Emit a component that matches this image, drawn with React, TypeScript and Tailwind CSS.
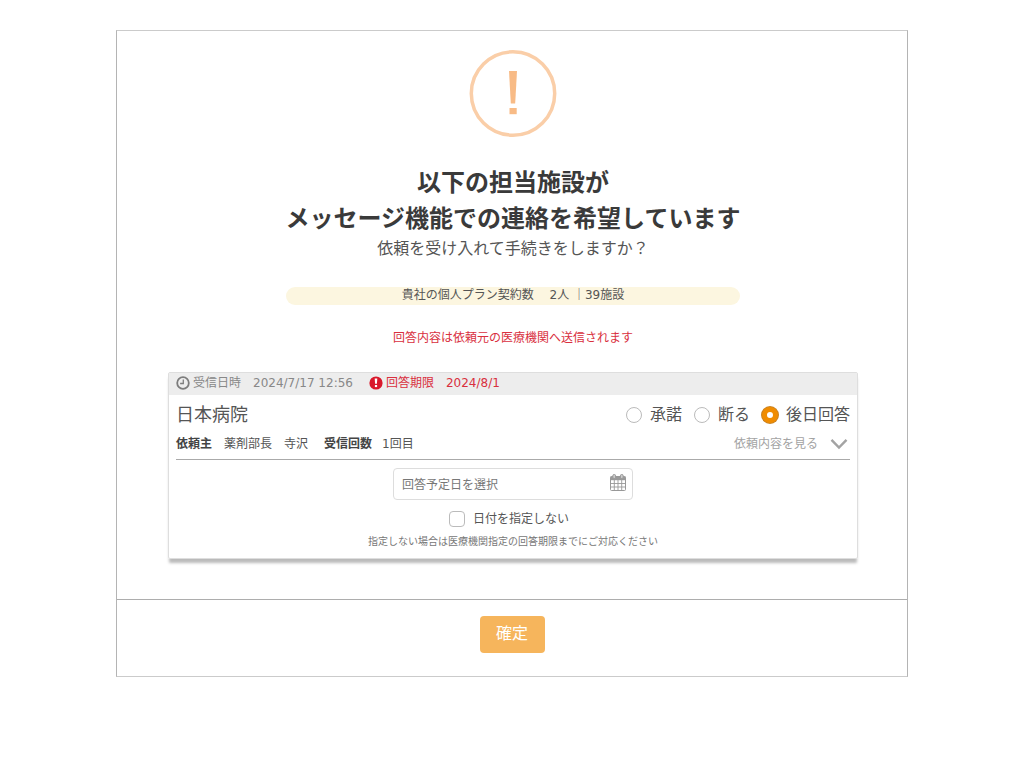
import { useState } from "react";

const ANSWERS = [
  { id: "accept", label: "承諾" },
  { id: "decline", label: "断る" },
  { id: "later", label: "後日回答" },
];

function WarningIcon() {
  return (
    <svg viewBox="0 0 88 88" className="w-22 h-22" aria-hidden="true">
      <circle cx="44" cy="43.5" r="41.7" fill="none" stroke="#facea8" strokeWidth="3.5" />
      <path d="M40 21h8l-1.8 32.5h-4.4z" fill="#f8bb86" />
      <path d="M40.5 58h7.2v6.2h-7.2z" fill="#f8bb86" />
    </svg>
  );
}

function ClockIcon() {
  return (
    <svg viewBox="0 0 14 14" className="w-3.5 h-3.5" fill="none" stroke="#7d7d7d" aria-hidden="true">
      <circle cx="7" cy="7" r="5.8" strokeWidth="1.8" />
      <path d="M7.3 3.5v4h-3.2" strokeWidth="1.3" />
    </svg>
  );
}

function AlertIcon() {
  return (
    <svg viewBox="0 0 14 14" className="w-3.5 h-3.5" aria-hidden="true">
      <circle cx="7" cy="7" r="6.6" fill="#d9182b" />
      <path d="M5.7 2.6h2.6l-.4 5.2H6.1z" fill="#fff" />
      <path d="M5.9 9h2.2v2.1H5.9z" fill="#fff" />
    </svg>
  );
}

function CalendarIcon() {
  return (
    <svg viewBox="0 0 16 17" className="w-4 h-[17px]" aria-hidden="true">
      <rect x="0.5" y="2.5" width="15" height="14" rx="1" fill="#fff" stroke="#999" />
      <path d="M0.5 2.5h15v3.7H0.5z" fill="#999" />
      <path d="M0.5 9.5h15M0.5 13h15M4.3 6v10.5M8 6v10.5M11.7 6v10.5" stroke="#999" strokeWidth="0.9" />
      <rect x="2.8" y="0.5" width="2.8" height="4" rx="1.3" fill="#ccc" stroke="#999" />
      <rect x="10.4" y="0.5" width="2.8" height="4" rx="1.3" fill="#ccc" stroke="#999" />
    </svg>
  );
}

function ChevronIcon() {
  return (
    <svg viewBox="0 0 18 12" className="w-[18px] h-3" fill="none" aria-hidden="true">
      <path d="M1.5 1.8L9 9.6l7.5-7.8" stroke="#a3a3a3" strokeWidth="2.4" />
    </svg>
  );
}

export default function App() {
  const [answer, setAnswer] = useState("later");
  const [date, setDate] = useState("");
  const [noDate, setNoDate] = useState(false);

  return (
    <main className="min-h-screen bg-white py-[30px] font-['DejaVu_Sans','Noto_Sans_CJK_JP',sans-serif] text-xs text-[#555]">
      <div
        role="dialog"
        aria-labelledby="dialog-title"
        className="w-full max-w-[792px] mx-auto border border-[#b4b4b4] border-y-[#cbcbcb]"
      >
        <div className="flex flex-col items-center pl-[51px] pr-[49px] pt-[19px] pb-10">
          <WarningIcon />
          <h1
            id="dialog-title"
            className="mt-[27px] text-2xl leading-9 font-bold text-center text-[#3a3a3a]"
          >
            以下の担当施設が
            <br />
            メッセージ機能での連絡を希望しています
          </h1>
          <p className="text-base leading-6">依頼を受け入れて手続きをしますか？</p>

          <p className="w-full max-w-[454px] mt-[26px] pb-0.5 rounded-full bg-[#fcf6e0] leading-4 text-center whitespace-pre-wrap">
            {"貴社の個人プラン契約数　 2人 ｜39施設"}
          </p>
          <p className="mt-6 leading-[18px] text-[#d9303e]">
            回答内容は依頼元の医療機関へ送信されます
          </p>

          {/* Request card */}
          <section className="w-full mt-[25px] border border-[#dedede] rounded-xs shadow-[0_5px_3px_-1px_rgba(0,0,0,0.27)]">
            <div className="flex items-center h-[22px] px-[7px] pb-0.5 bg-[#ededed] leading-[18px] text-[#888]">
              <ClockIcon />
              <span className="ml-[3px]">受信日時</span>
              <span className="ml-3">2024/7/17 12:56</span>
              <span className="flex items-center ml-4 text-[#d9303e]">
                <AlertIcon />
                <span className="ml-[3px]">回答期限</span>
                <span className="ml-3">2024/8/1</span>
              </span>
            </div>

            <div className="px-[7px] pt-2 pb-[7px]">
              <div className="flex items-center justify-between h-6">
                <h2 className="text-lg leading-6">日本病院</h2>
                <div role="radiogroup" aria-label="回答" className="flex gap-3">
                  {ANSWERS.map((item) => (
                    <label key={item.id} className="flex items-center gap-2 text-base leading-6">
                      <input
                        type="radio"
                        name="answer"
                        value={item.id}
                        checked={answer === item.id}
                        onChange={() => setAnswer(item.id)}
                        className="appearance-none w-4 h-4 rounded-full border border-[#bbb] bg-white checked:border-[5px] checked:border-[#f08c00] checked:shadow-[0_0_0_1px_#c98324]"
                      />
                      {item.label}
                    </label>
                  ))}
                </div>
              </div>

              <div className="flex items-center justify-between mt-2 pb-1.5 border-b border-[#aaa] leading-[18px]">
                <dl className="flex">
                  <dt className="font-bold text-[#444]">依頼主</dt>
                  <dd className="ml-3">薬剤部長　寺沢</dd>
                  <dt className="ml-4 font-bold text-[#444]">受信回数</dt>
                  <dd className="ml-2.5">1回目</dd>
                </dl>
                <button type="button" className="flex items-center gap-3 pr-0.5 text-[#a3a3a3]">
                  依頼内容を見る
                  <ChevronIcon />
                </button>
              </div>

              <div className="flex flex-col items-center mt-2">
                <label className="flex items-center w-full max-w-[240px] h-8 pl-2 pr-1.5 border border-[#ddd] rounded">
                  <input
                    type="text"
                    aria-label="回答予定日"
                    placeholder="回答予定日を選択"
                    value={date}
                    onChange={(e) => setDate(e.target.value)}
                    className="flex-1 min-w-0 pt-0.5 outline-none placeholder:text-[#777]"
                  />
                  <span className="pb-1">
                    <CalendarIcon />
                  </span>
                </label>
                <label className="flex items-center gap-2 mt-2.5 pr-2 leading-[18px]">
                  <input
                    type="checkbox"
                    checked={noDate}
                    onChange={(e) => setNoDate(e.target.checked)}
                    className="appearance-none w-4 h-4 border border-[#bbb] rounded checked:bg-[#f08c00]"
                  />
                  日付を指定しない
                </label>
                <p className="mt-[5px] text-[10px] leading-[18px] text-[#777]">
                  指定しない場合は医療機関指定の回答期限までにご対応ください
                </p>
              </div>
            </div>
          </section>
        </div>

        <div className="flex justify-center pt-4 pb-[23px] border-t border-[#adadad]">
          <button
            type="button"
            className="w-[65px] h-[37px] pb-0.5 rounded bg-[#f6b55c] text-base text-white"
          >
            確定
          </button>
        </div>
      </div>
    </main>
  );
}
